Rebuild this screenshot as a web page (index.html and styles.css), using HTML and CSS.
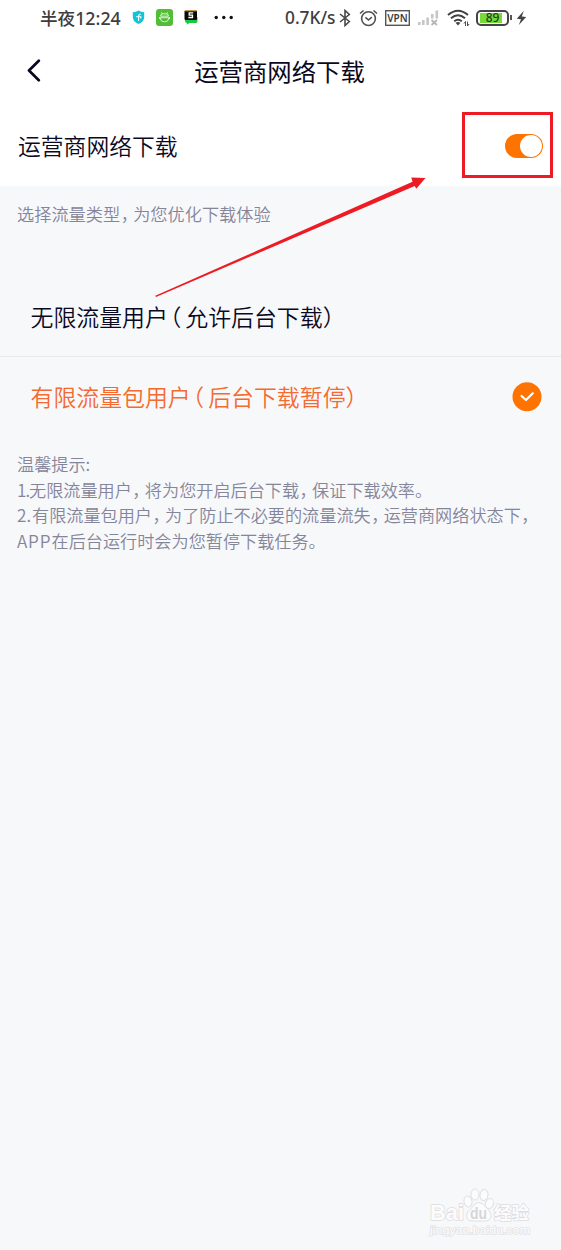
FILE: index.html
```html
<!DOCTYPE html>
<html lang="zh-CN">
<head>
<meta charset="utf-8">
<title>运营商网络下载</title>
<link rel="stylesheet" href="styles.css">
</head>
<body>
<div class="screen">
  <header class="top">
    <div class="status">
      <div class="status-left">
        <span class="clock">半夜<span class="latin">12:24</span></span>
        <svg class="shield" width="13" height="15" viewBox="0 0 13 15"><path d="M6.5 .5 Q9 2.2 12.2 2.2 V7 Q12 12 6.5 14 Q1 12 .8 7 V2.2 Q4 2.2 6.5 .5Z" fill="#12c4d4"/><path d="M6.6 11V5.4L8.6 4M4.2 6.8 H8.8V8.4" fill="none" stroke="#fff" stroke-width="1.1"/></svg>
        <svg class="robot" width="17" height="17" viewBox="0 0 17 17"><rect width="17" height="17" rx="3" fill="#52bd36"/><g fill="none" stroke="#e9f8e4" stroke-width=".9"><path d="M4.5 7.2Q4.5 4.8 7 4.8H10Q12.5 4.8 12.5 7.2ZM5.4 3.3 6.5 4.9M11.6 3.3 10.5 4.9M4.5 8.7H12.5V10Q12.3 12.8 8.5 12.8T4.5 10Z"/><path d="M3.5 8V10M13.5 8V10"/></g></svg>
        <svg class="chat" width="14" height="15" viewBox="0 0 14 15"><path d="M1 7H13.5V10.5Q13.5 13 12 13H5.5L2.5 14.8 3 13Q1 13 1 10Z" fill="#16c940"/><rect x=".5" y=".5" width="12.5" height="9.5" rx="1" fill="#080a08"/><path d="M1 .8H12.5" stroke="#d5a32b" stroke-width="1"/><path d="M9.2 2.9H5.2V5.1H8.5V7.5H4.4" fill="none" stroke="#fff" stroke-width="1.3"/></svg>
        <svg class="dots" width="20" height="5" viewBox="0 0 20 5" fill="#111"><circle cx="2.2" cy="2.5" r="1.7"/><circle cx="9.8" cy="2.5" r="1.7"/><circle cx="17.2" cy="2.5" r="1.7"/></svg>
      </div>
      <div class="status-right">
        <span class="speed">0.7K/s</span>
        <svg class="bluetooth" width="12" height="18" viewBox="0 0 12 18"><path d="M1 5 10.3 12.5 6 16.5V1.5L10.3 5.5 1 13" fill="none" stroke="#4a4a4a" stroke-width="1.6"/></svg>
        <svg class="alarm" width="19" height="18" viewBox="0 0 19 18"><g fill="none" stroke="#505050" stroke-width="1.6"><circle cx="9.5" cy="9.6" r="6.9"/><path d="M1 4.5 4.5 1.5M14.5 1.5 18 4.5M6.4 8.3 9.5 11 12.8 8.2"/></g></svg>
        <span class="vpn">VPN</span>
        <svg class="signal" width="22" height="17" viewBox="0 0 22 17"><g fill="#c6c6c6"><rect x="1" y="13" width="2.6" height="3"/><rect x="5" y="11" width="2.6" height="5"/><rect x="9.3" y="8.5" width="2.6" height="7.5"/><rect x="14" y="5" width="2.6" height="4.5"/><rect x="18.5" y="1.5" width="2.6" height="8"/></g><path d="M14.5 11 20 16M20 11 14.5 16" stroke="#b5b5b5" stroke-width="1.7"/></svg>
        <svg class="wifi" width="23" height="18" viewBox="0 0 23 18"><g fill="none" stroke="#414141" stroke-width="2"><path d="M1 6Q11 -2.5 21 6"/><path d="M4 9.3Q11 3.2 18 9.3"/><path d="M7.2 12.3Q11 9.1 14.8 12.3"/></g><path d="M8.6 13.8Q11 12 13.4 13.8L11 16.5Z" fill="#414141"/><path d="M18.5 17V12.5L17 14.5M20.5 12.5V17L22 15" fill="none" stroke="#505050" stroke-width="1"/></svg>
        <span class="battery"><span class="battery-level">89</span></span>
        <span class="battery-tip"></span>
        <svg class="bolt" width="11" height="16" viewBox="0 0 11 16"><path d="M7.8 .8 .8 8.8 5 9.2 2.8 15 10.2 7 5.8 6.4Z" fill="#444"/></svg>
      </div>
    </div>
    <nav class="nav">
      <svg class="back" width="14" height="24" viewBox="0 0 14 24"><path d="M11.8 1.8 2 11.5 11.8 21.2" fill="none" stroke="#090722" stroke-width="2.7" stroke-linecap="round" stroke-linejoin="round"/></svg>
      <h1 class="title">运营商网络下载</h1>
    </nav>
    <section class="setting">
      <span class="setting-label">运营商网络下载</span>
      <div class="highlight"><span class="switch"><span class="knob"></span></span></div>
    </section>
  </header>
  <p class="caption">选择流量类型<span class="comma">，</span>为您优化下载体验</p>
  <div class="option">
    <span>无限流量用户<span class="open">（</span>允许后台下载<span class="close">）</span></span>
  </div>
  <div class="option selected">
    <span>有限流量包用户<span class="open">（</span>后台下载暂停<span class="close">）</span></span>
    <svg class="check" width="30" height="30" viewBox="0 0 30 30"><circle cx="15" cy="14.7" r="14.5" fill="#ff7300"/><path d="M9.5 14 14 18 20.8 11.3" fill="none" stroke="#fff" stroke-width="2.2" stroke-linecap="round" stroke-linejoin="round"/></svg>
  </div>
  <div class="tips">
    <p>温馨提示:</p>
    <p><span class="num one">1.</span>无限流量用户<span class="comma">，</span>将为您开启后台下载<span class="comma">，</span>保证下载效率。</p>
    <p><span class="num two">2.</span>有限流量包用户<span class="comma">，</span>为了防止不必要的流量流失<span class="comma">，</span>运营商网络状态下<span class="comma">，</span></p>
    <p><span class="app">APP</span>在后台运行时会为您暂停下载任务。</p>
  </div>
  <svg class="arrow" width="280" height="130" viewBox="150 170 280 130"><path d="M155.3 295.8 412.5 181.8 411.3 177.6 425.5 178 416.3 188.7 414.7 186 156 297Z" fill="#ed1c24"/></svg>
  <svg class="watermark" width="120" height="64" viewBox="420 1180 120 64">
    <g fill="#fcfcfd" stroke="#dfe0e2" stroke-width="1">
      <ellipse cx="468" cy="1201.5" rx="4" ry="5.5" transform="rotate(-12 468 1201.5)"/>
      <ellipse cx="475" cy="1194.5" rx="4" ry="5.5"/>
      <ellipse cx="484" cy="1195" rx="4" ry="5.5" transform="rotate(10 484 1195)"/>
      <ellipse cx="489.5" cy="1203.5" rx="4" ry="5" transform="rotate(22 489.5 1203.5)"/>
      <path d="M478.5 1202.5Q483 1202.5 486 1207.5 492 1213 491 1217 489 1222 483 1221H473Q466 1221 466.5 1215 467 1212 472 1207.5 475 1202.5 478.5 1202.5Z"/>
    </g>
    <g class="mark">
      <text class="bai" x="430" y="1220" font-size="22" textLength="34" lengthAdjust="spacingAndGlyphs">Bai</text>
      <text class="du" x="470" y="1218.5" font-size="16" textLength="17" lengthAdjust="spacingAndGlyphs">du</text>
      <text x="494" y="1219" font-size="17.5">经验</text>
      <text class="url" x="430" y="1233.5" font-size="11" textLength="100" lengthAdjust="spacingAndGlyphs">jingyan.baidu.com</text>
    </g>
  </svg>
</div>
</body>
</html>
```
FILE: styles.css
```css
* { box-sizing: border-box; }
body, p, h1 { margin: 0; }
body { background: #f7f8fa; font-family: "Noto Sans CJK SC", sans-serif; }
svg { display: block; flex: none; }
.screen { position: relative; width: 561px; height: 1250px; overflow: hidden; white-space: nowrap; }
.top { height: 186px; background: #fff; }

.status { display: flex; justify-content: space-between; height: 36px; padding: 0 34px 0 40px; color: #3d3d3d; }
.status-left, .status-right { display: flex; align-items: center; height: 35px; }
.clock { width: 81px; font-size: 17.6px; font-weight: 500; line-height: 34px; }
.latin, .speed { font-family: "Noto Sans", sans-serif; font-weight: 500; }
.latin { font-size: 17.8px; }
.shield { margin-left: 11px; }
.robot { margin-left: 11px; }
.chat { margin-left: 11px; }
.dots { margin-left: 16px; }
.speed { width: 54px; font-size: 17.3px; line-height: 34px; }
.alarm { margin-left: 8px; }
.vpn { width: 25px; height: 16px; margin-left: 7px; border: 1px solid #555; box-shadow: inset 0 0 0 .5px #777; font: 600 10px/14px "Noto Sans", sans-serif; text-align: center; }
.signal { margin-left: 7px; }
.wifi { margin-left: 8px; }
.battery { width: 33px; height: 16px; margin-left: 6px; padding: 1px 2px; border: 2px solid #444; border-radius: 5px; }
.battery-level { display: block; height: 10px; background: linear-gradient(90deg, #74db38 89%, #fff 89%); color: #263b1f; font: 500 12px/10px "Noto Sans", sans-serif; text-align: center; }
.battery-tip { width: 2px; height: 5px; margin-left: 1px; background: #555; }
.bolt { margin-left: 4px; }

.nav { display: grid; grid-template-columns: 60px 1fr 62px; align-items: center; height: 70px; }
.back { margin-left: 27px; }
.title { color: #0b0822; font-size: 24.4px; font-weight: 400; line-height: 36px; text-align: center; }

.setting { display: flex; justify-content: space-between; padding: 6px 8px 0 18px; }
.setting-label { color: #0b0822; font-size: 22.8px; font-weight: 350; line-height: 68px; }
.highlight { display: flex; align-items: center; justify-content: flex-end; width: 91px; height: 66px; padding-right: 7px; border: 3px solid #ed1c24; }
.switch { display: flex; justify-content: flex-end; width: 38px; height: 24px; margin-top: 2px; padding: 1px; border-radius: 12px; background: #ff7300; }
.knob { width: 22px; height: 22px; border-radius: 50%; background: #fff; }

.caption { height: 91px; padding: 14px 17px 0; color: #85859a; font-size: 17.2px; font-weight: 350; line-height: 28px; }
.comma, .open, .close { font-feature-settings: "halt"; }
.comma { display: inline-block; width: 12.5px; margin-left: .5px; }

.option { display: flex; align-items: center; justify-content: space-between; height: 80px; padding: 0 19px 0 30.5px; border-bottom: 1px solid #e8e9eb; color: #0b0822; font-size: 22.9px; font-weight: 350; }
.option > span { margin-top: -2px; }
.open { margin: 0 4px 0 2px; }
.selected { border-bottom-color: transparent; color: #f46a31; }

.tips { padding: 14px 17px 0; color: #85859a; font-size: 17.15px; font-weight: 350; line-height: 25.6px; }
.num, .app { display: inline-block; }
.one { width: 12px; letter-spacing: -.8px; }
.two { width: 15px; }
.app { width: 34.5px; letter-spacing: .8px; }

.arrow { position: absolute; left: 150px; top: 170px; }
.watermark { position: absolute; left: 420px; top: 1180px; }
.mark { fill: #fcfcfd; stroke: #dcdde0; stroke-width: 1.5px; paint-order: stroke; stroke-linejoin: round; font-family: "Noto Sans CJK SC", sans-serif; font-weight: 700; }
.mark .bai { font-family: "Liberation Sans", sans-serif; }
.mark .du { fill: #d5d6d9; stroke: none; font-family: "Liberation Sans", sans-serif; }
.mark .url { stroke: #e3e4e7; stroke-width: 1.5px; font-family: "Liberation Sans", sans-serif; font-weight: 400; }
```
